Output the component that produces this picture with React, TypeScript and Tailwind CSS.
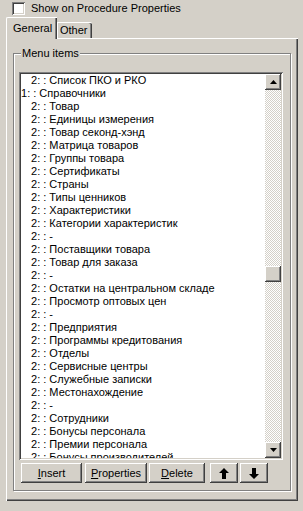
import React from "react";

const items: [number, string][] = [
  [2, "Список ПКО и РКО"],
  [1, "Справочники"],
  [2, "Товар"],
  [2, "Единицы измерения"],
  [2, "Товар секонд-хэнд"],
  [2, "Матрица товаров"],
  [2, "Группы товара"],
  [2, "Сертификаты"],
  [2, "Страны"],
  [2, "Типы ценников"],
  [2, "Характеристики"],
  [2, "Категории характеристик"],
  [2, "-"],
  [2, "Поставщики товара"],
  [2, "Товар для заказа"],
  [2, "-"],
  [2, "Остатки на центральном складе"],
  [2, "Просмотр оптовых цен"],
  [2, "-"],
  [2, "Предприятия"],
  [2, "Программы кредитования"],
  [2, "Отделы"],
  [2, "Сервисные центры"],
  [2, "Служебные записки"],
  [2, "Местонахождение"],
  [2, "-"],
  [2, "Сотрудники"],
  [2, "Бонусы персонала"],
  [2, "Премии персонала"],
  [2, "Бонусы производителей"],
];

const raised =
  "bg-[#d4d0c8] shadow-[inset_-1px_-1px_#404040,inset_1px_1px_#fff,inset_-2px_-2px_#808080]";

function ScrollArrow({ down }: { down?: boolean }) {
  return (
    <div className={`${raised} flex h-[16px] w-[16px] items-center justify-center`}>
      <svg width="7" height="4" viewBox="0 0 7 4" className={down ? "" : "rotate-180"}>
        <polygon points="0,0 7,0 3.5,4" fill="#000" />
      </svg>
    </div>
  );
}

function BigArrow({ down }: { down?: boolean }) {
  return (
    <svg width="10" height="11" viewBox="0 0 10 11" className={down ? "rotate-180" : ""}>
      <polygon points="5,0 10,5 7,5 7,11 3,11 3,5 0,5" fill="#000" />
    </svg>
  );
}

export default function App() {
  return (
    <div className="h-[511px] w-[303px] overflow-hidden bg-[#d4d0c8] font-['Liberation_Sans',Arial,sans-serif] text-[11px] leading-[13px] text-black">
      {/* checkbox row */}
      <div className="flex h-[15px] items-center gap-[6px] pl-[12px] pt-[1px]">
        <div className="h-[13px] w-[13px] bg-white shadow-[inset_1px_1px_#808080,inset_-1px_-1px_#fff,inset_2px_2px_#404040,inset_-2px_-2px_#d4d0c8]" />
        <span>Show on Procedure Properties</span>
      </div>

      {/* tabs */}
      <div className="ml-[6px] mt-[2px] flex h-[21px] items-end">
        <div className="relative z-10 -mb-[1px] flex h-[22px] w-[51px] items-center rounded-tl-[2px] border-l border-t border-white bg-[#d4d0c8] pl-[6px] shadow-[inset_-1px_0_#404040,inset_-2px_0_#808080]">
          General
        </div>
        <div className="flex h-[16px] w-[35px] items-center rounded-tr-[2px] border-l border-t border-white pl-[2px] shadow-[inset_-1px_0_#404040,inset_-2px_0_#808080]">
          Other
        </div>
      </div>

      {/* tab panel */}
      <div className="ml-[6px] h-[463px] w-[292px] border-l border-t border-white pl-[6px] pt-[14px] shadow-[inset_-1px_-1px_#404040,inset_-2px_-2px_#808080]">
        {/* group box */}
        <div className="relative h-[438px] w-[278px] border border-[#808080] pl-[5px] pt-[18px] shadow-[1px_1px_#fff,inset_1px_1px_#fff]">
          <span className="absolute -top-[7px] left-[7px] bg-[#d4d0c8] px-[1px]">Menu items</span>

          {/* list box */}
          <div className="flex h-[388px] w-[264px] bg-white p-[2px] shadow-[inset_1px_1px_#808080,inset_-1px_-1px_#fff,inset_2px_2px_#404040,inset_-2px_-2px_#d4d0c8]">
            <div className="h-[384px] flex-1 overflow-hidden whitespace-nowrap">
              {items.map(([lvl, name], i) => (
                <div key={i} className={`h-[13px] ${lvl === 1 ? "pl-0" : "pl-[10px]"}`}>
                  {lvl}: : {name}
                </div>
              ))}
            </div>
            <div className="flex w-[16px] flex-col">
              <ScrollArrow />
              <div className="flex-1 bg-[repeating-conic-gradient(#d4d0c8_0_25%,#fff_0_50%)] bg-[length:2px_2px]">
                <div className={`${raised} mt-[176px] h-[16px] w-[16px]`} />
              </div>
              <ScrollArrow down />
            </div>
          </div>

          {/* buttons */}
          <div className="ml-[2px] mt-[3px] flex h-[20px] font-normal">
            <button className={`${raised} w-[61px]`}>
              <u>I</u>nsert
            </button>
            <button className={`${raised} ml-[3px] w-[62px]`}>
              <u>P</u>roperties
            </button>
            <button className={`${raised} ml-[2px] w-[56px]`}>
              <u>D</u>elete
            </button>
            <button className={`${raised} ml-[5px] flex w-[28px] items-center justify-center`}>
              <BigArrow />
            </button>
            <button className={`${raised} ml-[2px] flex w-[28px] items-center justify-center`}>
              <BigArrow down />
            </button>
          </div>
        </div>
      </div>
    </div>
  );
}
